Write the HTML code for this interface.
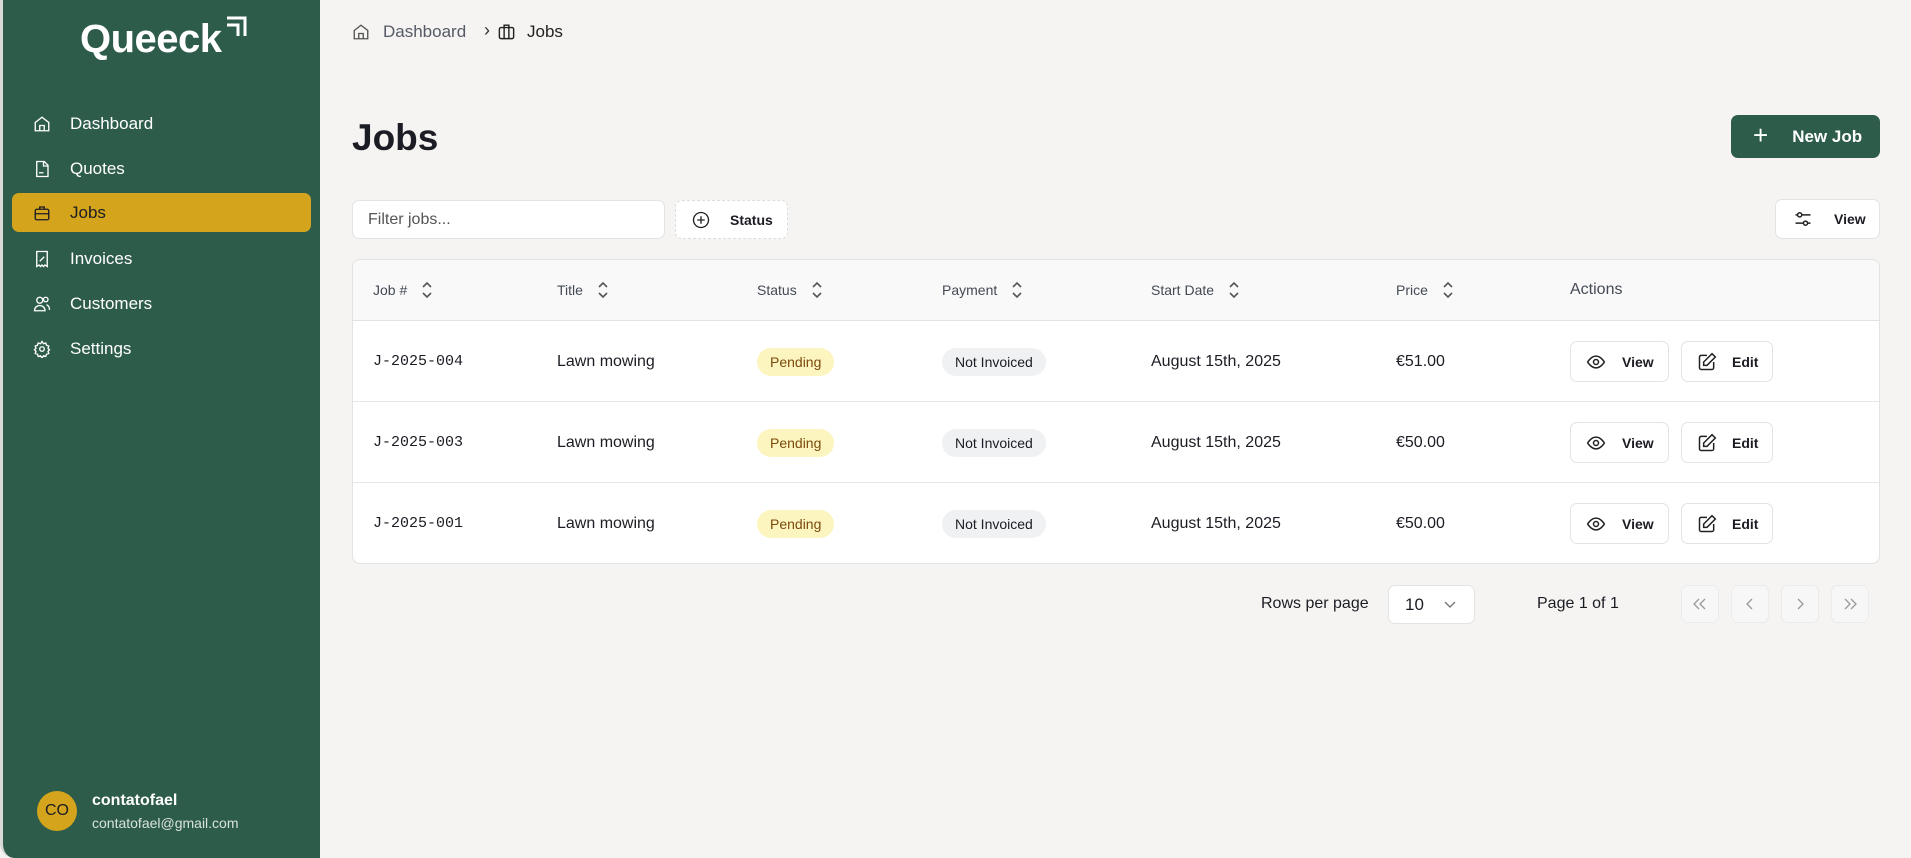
<!DOCTYPE html>
<html><head><meta charset="utf-8"><style>
*{box-sizing:border-box;margin:0;padding:0}
body{width:1911px;height:858px;background:#f5f4f2;font-family:"Liberation Sans",sans-serif;color:#1c1c24;position:relative;overflow:hidden}
.abs{position:absolute;white-space:nowrap}
.side{left:0;top:0;width:320px;height:858px;background:#2e5c4b;border-left:3px solid #d9d9d9;border-bottom-left-radius:14px}
.logo{left:80px;top:17px;color:#fff;font-size:40px;font-weight:bold;letter-spacing:-0.5px}
.nav{left:12px;width:299px;height:39px;border-radius:7px;color:#fff;font-size:17px;display:flex;align-items:center}
.nav svg{margin-left:21px;margin-right:19px}
.nav.act{background:#d4a51c;color:#1c1c24}
.btn{background:#fff;border:1px solid #e3e3e3;border-radius:7px;display:flex;align-items:center;font-size:14px;font-weight:bold;color:#1c1c24}
.th{top:260px;height:60px;display:flex;align-items:center;font-size:14px;color:#444a55}
.th svg{margin-left:14px}
.cell{display:flex;align-items:center;height:81px;font-size:16px}
.pill{height:28px;border-radius:14px;padding:0 13px;font-size:14px;display:flex;align-items:center}
.pg{width:38px;height:38px;border:1px solid #ebebeb;background:#f7f7f7;border-radius:7px;display:flex;align-items:center;justify-content:center}
</style></head><body>
<div class="abs side"></div>
<div class="abs logo">Queeck</div>
<svg class="abs" style="left:223px;top:14px" width="28" height="24" viewBox="0 0 28 24" fill="none" stroke="#fff" stroke-width="3"><path d="M4 4H22V22"/><path d="M4 11H15V22"/></svg>

<div class="abs nav" style="top:104px"><svg width="18" height="18" viewBox="0 0 24 24" fill="none" stroke="#fff" stroke-width="1.8"><path d="M3 10L12 3l9 7v11H3z"/><path d="M9 21v-7h6v7"/></svg>Dashboard</div>
<div class="abs nav" style="top:149px"><svg width="18" height="18" viewBox="0 0 24 24" fill="none" stroke="#fff" stroke-width="1.8"><path d="M5 2h10l5 5v15H5z"/><path d="M14 2v6h6M8 17h6"/></svg>Quotes</div>
<div class="abs nav act" style="top:193px"><svg width="18" height="18" viewBox="0 0 24 24" fill="none" stroke="#1c1c24" stroke-width="1.8"><rect x="3" y="7" width="18" height="14" rx="2"/><path d="M9 7V4h6v3M3 13h18"/></svg>Jobs</div>
<div class="abs nav" style="top:239px"><svg width="18" height="18" viewBox="0 0 24 24" fill="none" stroke="#fff" stroke-width="1.8"><path d="M5 2h14v20l-3-2-2 2-2-2-2 2-2-2-3 2z"/><path d="M9 15l6-6M9 9h.1M15 15h.1"/></svg>Invoices</div>
<div class="abs nav" style="top:284px"><svg width="18" height="18" viewBox="0 0 24 24" fill="none" stroke="#fff" stroke-width="1.8"><circle cx="9" cy="7" r="4"/><path d="M2 21c0-4 3-7 7-7s7 3 7 7z"/><circle cx="17" cy="6" r="3"/><path d="M18 13c3 1 4 4 4 7"/></svg>Customers</div>
<div class="abs nav" style="top:329px"><svg width="18" height="18" viewBox="0 0 24 24" fill="none" stroke="#fff" stroke-width="1.8"><circle cx="12" cy="12" r="3"/><path d="M12 2l2 3 3-1 1 3 3 1-1 3 2 2-2 2 1 3-3 1-1 3-3-1-2 3-2-3-3 1-1-3-3-1 1-3-2-2 2-2-1-3 3-1 1-3 3 1z"/></svg>Settings</div>

<div class="abs" style="left:37px;top:791px;width:40px;height:40px;border-radius:50%;background:#d4a51c;display:flex;align-items:center;justify-content:center;font-size:16px;color:#1c1c24">CO</div>
<div class="abs" style="left:92px;top:792px;color:#fff;font-weight:bold;font-size:16px">contatofael</div>
<div class="abs" style="left:92px;top:815px;color:#d8e2dd;font-size:14px">contatofael@gmail.com</div>

<svg class="abs" style="left:352px;top:22px" width="18" height="20" viewBox="0 0 24 24" fill="none" stroke="#555" stroke-width="1.8"><path d="M3 10L12 3l9 7v11H3z"/><path d="M9 21v-7h6v7"/></svg>
<div class="abs" style="left:383px;top:22px;font-size:17px;color:#555a66">Dashboard</div>
<div class="abs" style="left:484px;top:20px;font-size:18px;color:#333">›</div>
<svg class="abs" style="left:497px;top:22px" width="19" height="19" viewBox="0 0 24 24" fill="none" stroke="#222" stroke-width="1.8"><rect x="3" y="7" width="18" height="14" rx="2"/><path d="M9 7V4h6v3M9 7v14M15 7v14"/></svg>
<div class="abs" style="left:527px;top:22px;font-size:17px;color:#222">Jobs</div>

<div class="abs" style="left:352px;top:117px;font-size:37px;font-weight:bold">Jobs</div>
<div class="abs" style="left:1731px;top:115px;width:149px;height:43px;background:#2e5c4b;border-radius:7px;color:#fff;font-size:17px;font-weight:bold;display:flex;align-items:center"><span style="font-size:26px;font-weight:normal;margin-left:22px;margin-right:24px;margin-top:-3px">+</span>New Job</div>

<div class="abs" style="left:352px;top:200px;width:313px;height:39px;background:#fff;border:1px solid #e3e3e3;border-radius:7px;font-size:16px;color:#555;padding:10px 15px">Filter jobs...</div>
<div class="abs btn" style="left:675px;top:200px;width:113px;height:39px;border:1.5px dashed #ddd"><svg style="margin:0 20px 0 16px" width="18" height="18" viewBox="0 0 24 24" fill="none" stroke="#222" stroke-width="1.8"><circle cx="12" cy="12" r="10"/><path d="M12 7v10M7 12h10"/></svg>Status</div>
<div class="abs btn" style="left:1775px;top:199px;width:105px;height:40px"><svg style="margin:0 21px 0 17px" width="20" height="20" viewBox="0 0 24 24" fill="none" stroke="#222" stroke-width="1.8"><path d="M3 7h18M3 17h18"/><circle cx="8" cy="7" r="2.5" fill="#fff"/><circle cx="15" cy="17" r="2.5" fill="#fff"/></svg>View</div>

<div class="abs" style="left:352px;top:259px;width:1528px;height:305px;background:#fff;border:1px solid #e3e3e3;border-radius:8px;overflow:hidden">
<div style="height:61px;background:#f9f9f9;border-bottom:1px solid #e3e3e3"></div>
<div style="height:81px;border-bottom:1px solid #e6e6e6"></div>
<div style="height:81px;border-bottom:1px solid #e6e6e6"></div>
</div>
<div class="abs th" style="left:373px">Job #<svg width="12" height="18" viewBox="0 0 12 18" fill="none" stroke="#555" stroke-width="1.6"><path d="M2 6l4-4 4 4M2 12l4 4 4-4"/></svg></div>
<div class="abs th" style="left:557px">Title<svg width="12" height="18" viewBox="0 0 12 18" fill="none" stroke="#555" stroke-width="1.6"><path d="M2 6l4-4 4 4M2 12l4 4 4-4"/></svg></div>
<div class="abs th" style="left:757px">Status<svg width="12" height="18" viewBox="0 0 12 18" fill="none" stroke="#555" stroke-width="1.6"><path d="M2 6l4-4 4 4M2 12l4 4 4-4"/></svg></div>
<div class="abs th" style="left:942px">Payment<svg width="12" height="18" viewBox="0 0 12 18" fill="none" stroke="#555" stroke-width="1.6"><path d="M2 6l4-4 4 4M2 12l4 4 4-4"/></svg></div>
<div class="abs th" style="left:1151px">Start Date<svg width="12" height="18" viewBox="0 0 12 18" fill="none" stroke="#555" stroke-width="1.6"><path d="M2 6l4-4 4 4M2 12l4 4 4-4"/></svg></div>
<div class="abs th" style="left:1396px">Price<svg width="12" height="18" viewBox="0 0 12 18" fill="none" stroke="#555" stroke-width="1.6"><path d="M2 6l4-4 4 4M2 12l4 4 4-4"/></svg></div>
<div class="abs th" style="left:1570px;font-size:16px">Actions</div>

<div class="abs" style="left:0;top:321px">
 <div class="abs cell" style="left:373px;font-family:'Liberation Mono',monospace;font-size:15px">J-2025-004</div>
 <div class="abs cell" style="left:557px">Lawn mowing</div>
 <div class="abs cell" style="left:757px"><div class="pill" style="background:#fdf5bf;color:#7a4b0c">Pending</div></div>
 <div class="abs cell" style="left:942px"><div class="pill" style="background:#f0f1f3;color:#1c1c24">Not Invoiced</div></div>
 <div class="abs cell" style="left:1151px">August 15th, 2025</div>
 <div class="abs cell" style="left:1396px">€51.00</div>
 <div class="abs btn" style="left:1570px;top:20px;width:99px;height:41px"><svg style="margin:0 16px 0 15px" width="20" height="20" viewBox="0 0 24 24" fill="none" stroke="#222" stroke-width="1.8"><path d="M2 12s4-7 10-7 10 7 10 7-4 7-10 7S2 12 2 12z"/><circle cx="12" cy="12" r="3"/></svg>View</div>
 <div class="abs btn" style="left:1681px;top:20px;width:92px;height:41px"><svg style="margin:0 15px 0 15px" width="20" height="20" viewBox="0 0 24 24" fill="none" stroke="#222" stroke-width="1.8"><path d="M12 4H5a2 2 0 0 0-2 2v13a2 2 0 0 0 2 2h13a2 2 0 0 0 2-2v-7"/><path d="M18 2l4 4-10 10H8v-4z"/></svg>Edit</div>
</div>
<div class="abs" style="left:0;top:402px">
 <div class="abs cell" style="left:373px;font-family:'Liberation Mono',monospace;font-size:15px">J-2025-003</div>
 <div class="abs cell" style="left:557px">Lawn mowing</div>
 <div class="abs cell" style="left:757px"><div class="pill" style="background:#fdf5bf;color:#7a4b0c">Pending</div></div>
 <div class="abs cell" style="left:942px"><div class="pill" style="background:#f0f1f3;color:#1c1c24">Not Invoiced</div></div>
 <div class="abs cell" style="left:1151px">August 15th, 2025</div>
 <div class="abs cell" style="left:1396px">€50.00</div>
 <div class="abs btn" style="left:1570px;top:20px;width:99px;height:41px"><svg style="margin:0 16px 0 15px" width="20" height="20" viewBox="0 0 24 24" fill="none" stroke="#222" stroke-width="1.8"><path d="M2 12s4-7 10-7 10 7 10 7-4 7-10 7S2 12 2 12z"/><circle cx="12" cy="12" r="3"/></svg>View</div>
 <div class="abs btn" style="left:1681px;top:20px;width:92px;height:41px"><svg style="margin:0 15px 0 15px" width="20" height="20" viewBox="0 0 24 24" fill="none" stroke="#222" stroke-width="1.8"><path d="M12 4H5a2 2 0 0 0-2 2v13a2 2 0 0 0 2 2h13a2 2 0 0 0 2-2v-7"/><path d="M18 2l4 4-10 10H8v-4z"/></svg>Edit</div>
</div>
<div class="abs" style="left:0;top:483px">
 <div class="abs cell" style="left:373px;font-family:'Liberation Mono',monospace;font-size:15px">J-2025-001</div>
 <div class="abs cell" style="left:557px">Lawn mowing</div>
 <div class="abs cell" style="left:757px"><div class="pill" style="background:#fdf5bf;color:#7a4b0c">Pending</div></div>
 <div class="abs cell" style="left:942px"><div class="pill" style="background:#f0f1f3;color:#1c1c24">Not Invoiced</div></div>
 <div class="abs cell" style="left:1151px">August 15th, 2025</div>
 <div class="abs cell" style="left:1396px">€50.00</div>
 <div class="abs btn" style="left:1570px;top:20px;width:99px;height:41px"><svg style="margin:0 16px 0 15px" width="20" height="20" viewBox="0 0 24 24" fill="none" stroke="#222" stroke-width="1.8"><path d="M2 12s4-7 10-7 10 7 10 7-4 7-10 7S2 12 2 12z"/><circle cx="12" cy="12" r="3"/></svg>View</div>
 <div class="abs btn" style="left:1681px;top:20px;width:92px;height:41px"><svg style="margin:0 15px 0 15px" width="20" height="20" viewBox="0 0 24 24" fill="none" stroke="#222" stroke-width="1.8"><path d="M12 4H5a2 2 0 0 0-2 2v13a2 2 0 0 0 2 2h13a2 2 0 0 0 2-2v-7"/><path d="M18 2l4 4-10 10H8v-4z"/></svg>Edit</div>
</div>

<div class="abs" style="left:1261px;top:595px;font-size:16px">Rows per page</div>
<div class="abs" style="left:1388px;top:585px;width:87px;height:39px;background:#fff;border:1px solid #e3e3e3;border-radius:7px;font-size:17px;padding:9px 16px">10<svg style="position:absolute;left:54px;top:14px" width="14" height="10" viewBox="0 0 14 10" fill="none" stroke="#777" stroke-width="1.4"><path d="M2 2l5 5 5-5"/></svg></div>
<div class="abs" style="left:1537px;top:595px;font-size:16px">Page 1 of 1</div>
<div class="abs pg" style="left:1681px;top:585px"><svg width="16" height="14" viewBox="0 0 16 14" fill="none" stroke="#999" stroke-width="1.3"><path d="M7 2L2 7l5 5M13 2L8 7l5 5"/></svg></div>
<div class="abs pg" style="left:1731px;top:585px"><svg width="16" height="14" viewBox="0 0 16 14" fill="none" stroke="#999" stroke-width="1.3"><path d="M10 2L5 7l5 5"/></svg></div>
<div class="abs pg" style="left:1781px;top:585px"><svg width="16" height="14" viewBox="0 0 16 14" fill="none" stroke="#999" stroke-width="1.3"><path d="M6 2l5 5-5 5"/></svg></div>
<div class="abs pg" style="left:1831px;top:585px"><svg width="16" height="14" viewBox="0 0 16 14" fill="none" stroke="#999" stroke-width="1.3"><path d="M3 2l5 5-5 5M9 2l5 5-5 5"/></svg></div>
</body></html>
